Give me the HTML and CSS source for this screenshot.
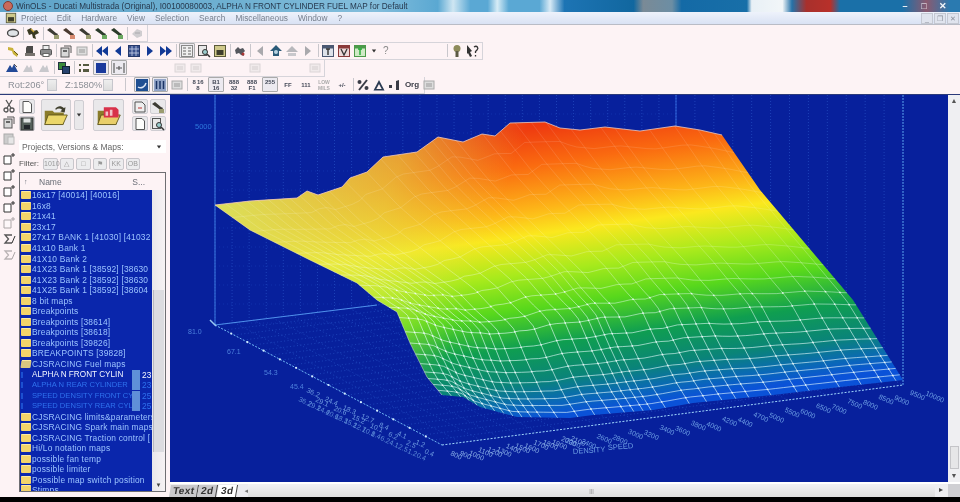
FILE: index.html
```html
<!DOCTYPE html>
<html lang="en">
<head>
<meta charset="utf-8">
<title>WinOLS</title>
<link rel="stylesheet" href="styles.css">
</head>
<body>
<svg class="sprite" aria-hidden="true">
  <symbol id="i-oval" viewBox="0 0 14 14"><ellipse cx="7" cy="7" rx="5.5" ry="3.5" fill="#dfe3e6" stroke="#444" stroke-width="1.3"/></symbol>
  <symbol id="i-sat" viewBox="0 0 14 14"><path d="M1 4l4-2 2 3 4-1 2 3-4 2 1 4-3-1-1-4-3 1z" fill="#3a3a22"/><path d="M5 3l3 3" stroke="#c9a63a" stroke-width="1.4"/></symbol>
  <symbol id="i-wr" viewBox="0 0 14 14"><path d="M1 4l3-2 6 5 2 1-1 2-3-1z" fill="#3c3c34"/><rect x="8" y="9" width="5" height="4" fill="#9a9c70"/></symbol>
  <symbol id="i-wr2" viewBox="0 0 14 14"><path d="M1 4l3-2 6 5 2 1-1 2-3-1z" fill="#4a3a30"/><rect x="8" y="9" width="5" height="4" fill="#d88a70"/></symbol>
  <symbol id="i-wr3" viewBox="0 0 14 14"><path d="M1 4l3-2 6 5 2 1-1 2-3-1z" fill="#2c3c2c"/><rect x="8" y="9" width="5" height="4" fill="#6aa860"/></symbol>
  <symbol id="i-faint" viewBox="0 0 14 14"><path d="M2 8l5-5 5 2v5l-5 2z" fill="#cfcdd0"/><path d="M5 7h5" stroke="#a9a8ac"/></symbol>
  <symbol id="i-key" viewBox="0 0 14 14"><path d="M1 3l5 1 1 3 4 3-1 3-4-3-1-3-4-1z" fill="#c9b23a"/><path d="M7 7l4 4" stroke="#66581a"/></symbol>
  <symbol id="i-doc" viewBox="0 0 14 14"><path d="M4 2h6v10H3V4z" fill="#4b4a48"/><rect x="2" y="9" width="10" height="3" fill="#77736e"/></symbol>
  <symbol id="i-print" viewBox="0 0 14 14"><rect x="4" y="1.5" width="6" height="4" fill="#eee" stroke="#666"/><rect x="1.5" y="5.5" width="11" height="5.5" rx="1" fill="#8a8a8c" stroke="#555"/><rect x="4" y="9.5" width="6" height="3" fill="#fff" stroke="#666"/></symbol>
  <symbol id="i-copy" viewBox="0 0 14 14"><rect x="2" y="4" width="8" height="9" fill="#d8d8d8" stroke="#555"/><path d="M5 2h7v7" fill="none" stroke="#555"/><rect x="4" y="6" width="4" height="2" fill="#666"/></symbol>
  <symbol id="i-dl" viewBox="0 0 14 14"><path d="M7 2L1 7l6 5zM13 2L7 7l6 5z" fill="#123a96"/></symbol>
  <symbol id="i-l" viewBox="0 0 14 14"><path d="M10 2L4 7l6 5z" fill="#123a96"/></symbol>
  <symbol id="i-r" viewBox="0 0 14 14"><path d="M4 2l6 5-6 5z" fill="#123a96"/></symbol>
  <symbol id="i-dr" viewBox="0 0 14 14"><path d="M1 2l6 5-6 5zM7 2l6 5-6 5z" fill="#123a96"/></symbol>
  <symbol id="i-grid" viewBox="0 0 14 14"><rect x="1.5" y="1.5" width="11" height="11" fill="#38508c" stroke="#24386a"/><path d="M5 2v10M9 2v10M2 5h10M2 9h10" stroke="#c9d2ea" stroke-width=".8"/></symbol>
  <symbol id="i-table" viewBox="0 0 14 14"><rect x="1.5" y="1.5" width="11" height="11" fill="#eee" stroke="#888"/><path d="M3 4h3M8 4h3M3 7h3M8 7h3M3 10h3M8 10h3" stroke="#666"/></symbol>
  <symbol id="i-find" viewBox="0 0 14 14"><rect x="1.5" y="1.5" width="8" height="10" fill="#e8e8e8" stroke="#555"/><circle cx="8" cy="8" r="2.5" fill="#9cc" stroke="#333"/><path d="M10 10l3 3" stroke="#333" stroke-width="1.5"/></symbol>
  <symbol id="i-yel" viewBox="0 0 14 14"><rect x="1.5" y="1.5" width="11" height="11" fill="#cfc98a" stroke="#5a5a3a"/><rect x="3.5" y="6" width="7" height="5" fill="#3e3e2c"/></symbol>
  <symbol id="i-dots" viewBox="0 0 14 14"><path d="M2 6l3-3 2 2 3-1 2 3-2 2 1 3-3-1-2-2-3 1z" fill="#55585e"/><circle cx="10" cy="10" r="1.5" fill="#a33"/></symbol>
  <symbol id="i-gl" viewBox="0 0 14 14"><path d="M10 2L4 7l6 5z" fill="#a9a9ad"/></symbol>
  <symbol id="i-gr" viewBox="0 0 14 14"><path d="M4 2l6 5-6 5z" fill="#a9a9ad"/></symbol>
  <symbol id="i-up" viewBox="0 0 14 14"><path d="M7 1L1 7h3v5h6V7h3z" fill="#2a5a78"/><circle cx="7" cy="8" r="2" fill="#b6d2e2"/></symbol>
  <symbol id="i-home" viewBox="0 0 14 14"><path d="M7 2L1 8h12z" fill="#b8b8bc"/><rect x="3" y="9" width="8" height="3" fill="#c8c8cc"/></symbol>
  <symbol id="i-tb" viewBox="0 0 14 14"><rect x="1.5" y="1.5" width="11" height="11" fill="#dde2ea" stroke="#4a5872"/><rect x="2" y="2" width="10" height="2.5" fill="#4a5872"/><path d="M7 5v6M5 5h4" stroke="#333" stroke-width="1.4"/></symbol>
  <symbol id="i-tr" viewBox="0 0 14 14"><rect x="1.5" y="1.5" width="11" height="11" fill="#ecd8d8" stroke="#8a3a3a"/><rect x="2" y="2" width="10" height="2.5" fill="#8a3a3a"/><path d="M4 5l3 6 3-6" stroke="#333" fill="none" stroke-width="1.3"/></symbol>
  <symbol id="i-tg" viewBox="0 0 14 14"><rect x="1.5" y="1.5" width="11" height="11" fill="#cfeac6" stroke="#4c9a4a"/><rect x="2" y="2" width="10" height="2.5" fill="#4c9a4a"/><path d="M7 5v6M5 5h4" stroke="#2a3" stroke-width="1.4"/></symbol>
  <symbol id="i-caret" viewBox="0 0 14 14"><path d="M4 5h6L7 9z" fill="#333"/></symbol>
  <symbol id="i-bulb" viewBox="0 0 14 14"><circle cx="7" cy="4.500" r="3.500" fill="#8d8a5a"/><rect x="5.500" y="7" width="3" height="6" fill="#5c5a44"/></symbol>
  <symbol id="i-help" viewBox="0 0 14 14"><path d="M1 1l5 6-2 1 2 4-2 1-2-4-1 1z" fill="#333"/><path d="M8 3c3-2 5 1 3 3l-1.500 1.500V9M9.500 11v1.500" fill="none" stroke="#333" stroke-width="1.300"/></symbol>
  <symbol id="i-mnt" viewBox="0 0 14 14"><path d="M1 11l4-7 2 3 2-4 4 8z" fill="#234a98"/><path d="M9 3l3 3" stroke="#555"/></symbol>
  <symbol id="i-mntg" viewBox="0 0 14 14"><path d="M2 11l4-7 2 3 2-3 2 7z" fill="#c8c8cc"/></symbol>
  <symbol id="i-chip" viewBox="0 0 14 14"><rect x="1.500" y="1.500" width="7" height="7" fill="#3a8a3a" stroke="#234"/><rect x="5.500" y="5.500" width="7" height="7" fill="#26426e" stroke="#123"/></symbol>
  <symbol id="i-bars" viewBox="0 0 14 14"><path d="M2 3h2v2H2zM2 8h2v3H2zM6 3h6v2H6zM6 8h6v3H6z" fill="#555a40"/></symbol>
  <symbol id="i-sq" viewBox="0 0 14 14"><rect x="2" y="2" width="10" height="10" fill="#1b3a9c"/></symbol>
  <symbol id="i-plus" viewBox="0 0 14 14"><path d="M2 2v10M12 2v10M4 7h6M7 5v4" stroke="#555" stroke-width="1.100" fill="none"/></symbol>
  <symbol id="i-rotb" viewBox="0 0 14 14"><rect x="1" y="1" width="12" height="12" fill="#1f4f92"/><path d="M3 9c3 2 7 0 8-4" stroke="#dbe6f5" fill="none" stroke-width="1.500"/></symbol>
  <symbol id="i-cols" viewBox="0 0 14 14"><rect x="1" y="1" width="12" height="12" fill="#93a5c8"/><path d="M3.500 3v8M7 3v8M10.500 3v8" stroke="#1d3466" stroke-width="1.500"/></symbol>
  <symbol id="i-lines" viewBox="0 0 14 14"><rect x="2" y="3" width="10" height="8" fill="#ddd" stroke="#aaa"/><path d="M4 6h6M4 8h6" stroke="#999"/></symbol>
  <symbol id="i-pct" viewBox="0 0 14 14"><path d="M11 2L3 12" stroke="#3a3c46" stroke-width="2"/><circle cx="3.500" cy="4" r="2" fill="#3a3c46"/><circle cx="10.500" cy="10" r="2" fill="#3a3c46"/></symbol>
  <symbol id="i-tri" viewBox="0 0 14 14"><path d="M7 2L1.500 12.500h11zM7 6l2.700 5H4.300z" fill="#2b3b52" fill-rule="evenodd"/></symbol>
  <symbol id="i-one" viewBox="0 0 14 14"><path d="M1 7h3v3H1zM8 3l3-1v10H8z" fill="#3a3c46"/></symbol>
  <symbol id="i-filev" viewBox="0 0 14 14"><path d="M2 2h7l3 3v7H2z" fill="#eee" stroke="#555"/><path d="M5 8h4" stroke="#b33"/></symbol>
  <symbol id="i-star" viewBox="0 0 14 14"><path d="M2 4h7v8H2z" fill="#fff" stroke="#333"/><path d="M11 1v4M9 3h4" stroke="#333"/></symbol>
  <symbol id="i-cut" viewBox="0 0 14 14"><path d="M4 1l5 8M10 1L5 9" stroke="#555" stroke-width="1.300"/><circle cx="4" cy="11" r="2" fill="none" stroke="#555" stroke-width="1.300"/><circle cx="10" cy="11" r="2" fill="none" stroke="#555" stroke-width="1.300"/></symbol>
  <symbol id="i-paste" viewBox="0 0 14 14"><rect x="2" y="3" width="9" height="10" fill="#ccc" stroke="#aaa"/><rect x="6" y="6" width="6" height="7" fill="#e6e6e6" stroke="#bbb"/></symbol>
  <symbol id="i-save" viewBox="0 0 14 14"><rect x="1" y="1" width="12" height="12" fill="#55605a" stroke="#333"/><rect x="3.500" y="1.500" width="7" height="4" fill="#dfe3e2"/><rect x="4" y="8" width="6" height="4" fill="#22262a"/></symbol>
  <symbol id="i-page" viewBox="0 0 14 14"><path d="M3 1.500h6l2.500 2.500v8.500H3z" fill="#fdfdfb" stroke="#555"/></symbol>
  <symbol id="i-sum" viewBox="0 0 14 14"><path d="M10 3H3l3.500 4L3 11h7" fill="none" stroke="#555" stroke-width="1.300"/><path d="M10 11l3-7" stroke="#333"/></symbol>
  <symbol id="i-open" viewBox="0 0 30 26"><path d="M2 8h9l2 2h11v14H2z" fill="#8a7c2a"/><path d="M6 13h22l-5 11H2z" fill="#ebd76a" stroke="#5c5218"/><path d="M14 6c3-4 7-4 10-1l2-1-1 6-5-1 2-2c-2-2-5-2-7 0z" fill="#40402e"/></symbol>
  <symbol id="i-openr" viewBox="0 0 30 26"><path d="M2 8h9l2 2h11v14H2z" fill="#8a7c2a"/><path d="M6 13h22l-5 11H2z" fill="#e8cf6a" stroke="#5c5218"/><path d="M9 4h14l3 3v9H9z" fill="#d8324a"/><path d="M11 9h3v5h-3zM16 7h3v7h-3z" fill="#f2c3c8"/></symbol>
</svg>

<div class="page">
  <header class="titlebar">
    <span class="app-ic"></span>
    <span class="title-text">WinOLS - Ducati Multistrada (Original), I00100080003, ALPHA N FRONT CYLINDER FUEL MAP for Default</span>
    <span class="win-btns"><b>&#8211;</b><b>&#9633;</b><b>&#10005;</b></span>
  </header>

  <nav class="menubar">
    <svg class="menu-ic"><use href="#i-yel"/></svg>
    <span>Project</span><span>Edit</span><span>Hardware</span><span>View</span><span>Selection</span><span>Search</span><span>Miscellaneous</span><span>Window</span><span>?</span>
    <span class="mdi-btns"><i>_</i><i>&#10064;</i><i>&#10005;</i></span>
  </nav>

  <section class="toolbars">
    <div class="tbrow">
      <div class="band band-1">
        <svg class="ic"><use href="#i-oval"/></svg><i class="sep"></i>
        <svg class="ic"><use href="#i-sat"/></svg><i class="sep"></i>
        <svg class="ic"><use href="#i-wr"/></svg><svg class="ic"><use href="#i-wr2"/></svg><svg class="ic"><use href="#i-wr"/></svg><svg class="ic"><use href="#i-wr3"/></svg><svg class="ic"><use href="#i-wr3"/></svg><i class="sep"></i>
        <svg class="ic"><use href="#i-faint"/></svg>
      </div>
    </div>
    <div class="tbrow">
      <div class="band band-2">
        <svg class="ic"><use href="#i-key"/></svg><svg class="ic"><use href="#i-doc"/></svg><svg class="ic"><use href="#i-print"/></svg><i class="sep"></i>
        <svg class="ic"><use href="#i-copy"/></svg><svg class="ic"><use href="#i-lines"/></svg><i class="sep"></i>
        <svg class="ic"><use href="#i-dl"/></svg><svg class="ic"><use href="#i-l"/></svg><svg class="ic"><use href="#i-grid"/></svg><svg class="ic"><use href="#i-r"/></svg><svg class="ic"><use href="#i-dr"/></svg><i class="sep"></i>
        <span class="on"><svg class="ic"><use href="#i-table"/></svg></span><svg class="ic"><use href="#i-find"/></svg><svg class="ic"><use href="#i-yel"/></svg><i class="sep"></i>
        <svg class="ic"><use href="#i-dots"/></svg><i class="sep"></i>
        <svg class="ic"><use href="#i-gl"/></svg><svg class="ic"><use href="#i-up"/></svg><svg class="ic"><use href="#i-home"/></svg><svg class="ic"><use href="#i-gr"/></svg><i class="sep"></i>
        <svg class="ic"><use href="#i-tb"/></svg><svg class="ic"><use href="#i-tr"/></svg><svg class="ic"><use href="#i-tg"/></svg><svg class="ic ic-s"><use href="#i-caret"/></svg><span class="qm">?</span>
        <span class="grow"></span><i class="sep"></i>
        <svg class="ic"><use href="#i-bulb"/></svg><svg class="ic"><use href="#i-help"/></svg>
      </div>
    </div>
    <div class="tbrow">
      <div class="band band-3">
        <svg class="ic"><use href="#i-mnt"/></svg><svg class="ic"><use href="#i-mntg"/></svg><svg class="ic"><use href="#i-mntg"/></svg><i class="sep"></i>
        <svg class="ic"><use href="#i-chip"/></svg><i class="sep"></i>
        <svg class="ic"><use href="#i-bars"/></svg><span class="on"><svg class="ic"><use href="#i-sq"/></svg></span><span class="on"><svg class="ic"><use href="#i-plus"/></svg></span>
        <span class="grow"></span>
        <svg class="ic dim"><use href="#i-lines"/></svg><svg class="ic dim"><use href="#i-lines"/></svg>
        <span class="grow"></span>
        <svg class="ic dim"><use href="#i-lines"/></svg>
        <span class="grow"></span>
        <svg class="ic dim"><use href="#i-lines"/></svg>
      </div>
    </div>
    <div class="tbrow">
      <div class="band band-4">
        <span class="val">Rot:206&#176;</span><span class="spin"></span>
        <span class="val val-z">Z:1580%</span><span class="spin"></span><i class="sep sep-wide"></i>
        <span class="on"><svg class="ic"><use href="#i-rotb"/></svg></span><span class="on"><svg class="ic"><use href="#i-cols"/></svg></span><svg class="ic"><use href="#i-lines"/></svg><i class="sep"></i>
        <span class="mini">8&#8201;16<br>8</span><span class="on mini">B1<br>16</span><span class="mini">888<br>32</span><span class="mini">888<br>F1</span><span class="on mini">255</span><span class="mini">FF</span><span class="mini">111</span><span class="mini low">LOW<br>MILS</span><span class="mini">+/-</span><i class="sep"></i>
        <svg class="ic"><use href="#i-pct"/></svg><svg class="ic"><use href="#i-tri"/></svg><svg class="ic"><use href="#i-one"/></svg><span class="mini org">Org</span><svg class="ic"><use href="#i-lines"/></svg>
      </div>
    </div>
  </section>

  <main class="workspace">
    <aside class="sidebar">
      <div class="edge">
        <svg class="ic"><use href="#i-cut"/></svg><svg class="ic"><use href="#i-copy"/></svg><svg class="ic"><use href="#i-paste"/></svg>
        <span class="edge-gap"></span>
        <svg class="ic"><use href="#i-star"/></svg><svg class="ic"><use href="#i-star"/></svg><svg class="ic"><use href="#i-star"/></svg><svg class="ic"><use href="#i-star"/></svg><svg class="ic dim"><use href="#i-star"/></svg>
        <svg class="ic"><use href="#i-sum"/></svg><svg class="ic dim"><use href="#i-sum"/></svg>
      </div>
      <div class="proj">
        <div class="bigrow">
          <div class="stack"><span class="sbtn"><svg class="ic"><use href="#i-page"/></svg></span><span class="sbtn"><svg class="ic"><use href="#i-save"/></svg></span></div>
          <span class="big"><svg class="ic-big"><use href="#i-open"/></svg></span>
          <span class="drop"><svg class="ic ic-s"><use href="#i-caret"/></svg></span>
          <span class="big big-2"><svg class="ic-big"><use href="#i-openr"/></svg></span>
          <div class="quad"><span class="sbtn"><svg class="ic"><use href="#i-filev"/></svg></span><span class="sbtn"><svg class="ic"><use href="#i-wr"/></svg></span><span class="sbtn"><svg class="ic"><use href="#i-page"/></svg></span><span class="sbtn"><svg class="ic"><use href="#i-find"/></svg></span></div>
        </div>
        <div class="combo"><span>Projects, Versions &amp; Maps:</span><svg class="ic ic-s"><use href="#i-caret"/></svg></div>
        <div class="filter"><span>Filter:</span><b>1010</b><b>&#9651;</b><b>&#9633;</b><b>&#9873;</b><b>KK</b><b>OB</b></div>
        <div class="listbox">
          <div class="listhead"><span class="hd-ic">&#8593;</span><span class="hd-name">Name</span><span class="hd-s">S...</span></div>
          <div class="listbody">
            <ul class="tree" id="tree">
              <li><i class="fd"></i>16x17 [40014] [40016]</li>
              <li><i class="fd"></i>16x8</li>
              <li><i class="fd"></i>21x41</li>
              <li><i class="fd"></i>23x17</li>
              <li><i class="fd"></i>27x17 BANK 1 [41030] [41032</li>
              <li><i class="fd"></i>41x10 Bank 1</li>
              <li><i class="fd"></i>41X10 Bank 2</li>
              <li><i class="fd"></i>41X23 Bank 1 [38592] [38630</li>
              <li><i class="fd"></i>41X23 Bank 2 [38592] [38630</li>
              <li><i class="fd"></i>41X25 Bank 1 [38592] [38604</li>
              <li><i class="fd"></i>8 bit maps</li>
              <li><i class="fd"></i>Breakpoints</li>
              <li><i class="fd"></i>Breakpoints [38614]</li>
              <li><i class="fd"></i>Breakpoints [38618]</li>
              <li><i class="fd"></i>Breakpoints [39826]</li>
              <li><i class="fd"></i>BREAKPOINTS [39828]</li>
              <li><i class="fd fd-open"></i>CJSRACING Fuel maps</li>
              <li class="map cur"><i class="mp"></i><span class="mn">ALPHA N FRONT CYLIN</span><em></em><span>23</span></li>
              <li class="map"><i class="mp"></i><span class="mn">ALPHA N REAR CYLINDER</span><em></em><span>23</span></li>
              <li class="map"><i class="mp"></i><span class="mn">SPEED DENSITY FRONT CY</span><em></em><span>25</span></li>
              <li class="map"><i class="mp"></i><span class="mn">SPEED DENSITY REAR CYL</span><em></em><span>25</span></li>
              <li><i class="fd"></i>CJSRACING limits&amp;parameters</li>
              <li><i class="fd"></i>CJSRACING Spark main maps</li>
              <li><i class="fd"></i>CJSRACING Traction control [</li>
              <li><i class="fd"></i>Hi/Lo notation maps</li>
              <li><i class="fd"></i>possible fan temp</li>
              <li><i class="fd"></i>possible limiter</li>
              <li><i class="fd"></i>Possible map switch position</li>
              <li class="last"><i class="fd"></i>Stimps</li>
            </ul>
            <div class="vscroll small-scroll"><span class="thumb"></span><span class="sc-down">&#9660;</span></div>
          </div>
        </div>
      </div>
    </aside>

    <section class="viewer">
      <div class="viewrow">
        <svg class="plot" id="plot" viewBox="170 95 778 387" preserveAspectRatio="none" role="img" aria-label="3D fuel map">
          <defs>
            <linearGradient id="heat" gradientUnits="userSpaceOnUse" x1="545" y1="125" x2="585" y2="412">
              <stop offset="0" stop-color="#ee3a10"/>
              <stop offset=".13" stop-color="#fa6a10"/>
              <stop offset=".28" stop-color="#fdb418"/>
              <stop offset=".37" stop-color="#fbe81e"/>
              <stop offset=".5" stop-color="#a8ea1c"/>
              <stop offset=".62" stop-color="#58d81c"/>
              <stop offset=".75" stop-color="#0f9e50"/>
              <stop offset=".87" stop-color="#0a8478"/>
              <stop offset=".95" stop-color="#0a68b8"/>
              <stop offset="1" stop-color="#0a52d8"/>
            </linearGradient>
            <linearGradient id="pale" gradientUnits="userSpaceOnUse" x1="215" y1="200" x2="470" y2="290">
              <stop offset="0" stop-color="#d8e860" stop-opacity=".95"/>
              <stop offset=".6" stop-color="#e0ea50" stop-opacity=".55"/>
              <stop offset="1" stop-color="#e0ea50" stop-opacity="0"/>
            </linearGradient>
            <linearGradient id="wire" gradientUnits="userSpaceOnUse" x1="0" y1="130" x2="0" y2="330">
              <stop offset="0" stop-color="#fff" stop-opacity=".14"/>
              <stop offset=".55" stop-color="#fff" stop-opacity=".2"/>
              <stop offset="1" stop-color="#eaffff" stop-opacity=".8"/>
            </linearGradient>
          </defs>
        </svg>
        <div class="vscroll main-scroll"><span class="sc-up">&#9650;</span><span class="grip"></span><span class="sc-down">&#9660;</span></div>
      </div>
      <div class="tabrow">
        <div class="tabs"><span class="tab">Text</span><span class="tab">2d</span><span class="tab tab-on">3d</span><span class="tab-arrow">&#9666;</span></div>
        <div class="hscroll"><span class="hgrip">|||</span></div>
        <span class="corner">&#9656;</span>
      </div>
    </section>
  </main>
  <div class="blackbar"></div>
</div>
<script src="app.js"></script>
</body>
</html>
```
FILE: styles.css
```css
*{box-sizing:border-box}
html,body{margin:0;padding:0;height:100%;background:#000;overflow:hidden}
body{font-family:"Liberation Sans",Arial,sans-serif;color:#555}
.sprite{display:none}
.page{width:960px;height:502px;display:flex;flex-direction:column;background:#fdf3f5;filter:blur(.55px);overflow:hidden}

.titlebar{height:12px;flex:none;display:flex;align-items:center;padding-left:3px;font-size:8.2px;color:#27394e;white-space:nowrap;
 background:linear-gradient(90deg,#5ea3c8 0,#6fb1d2 25%,#84bedc 39%,#5aa8d2 45.600%,#cfe6f2 47.200%,#5aa8d4 49%,#5aa8d4 50.800%,#d6ecf6 51.800%,#5aa8d4 53%,#5aa8d4 56.200%,#d8eaf6 57.300%,#1d74b4 58.800%,#11679f 66%,#7a8a96 67%,#6c8ea4 70%,#146aa6 71%,#186fa8 77.800%,#e8f0f6 78.300%,#f2f6f8 81.500%,#2572a8 82.500%,#a8302c 84%,#b8302a 86.500%,#1a70a8 87.500%,#1a70a8 94%,#8a5a70 96.500%,#2a7ab0 99%)}
.app-ic{width:10px;height:10px;border-radius:50%;background:#c96a5c;border:1px solid #7d3a34;flex:none}
.title-text{margin-left:3px;flex:1}
.win-btns{display:flex;gap:7px;padding-right:11px;color:#f4f8fb;font-size:9px}
.win-btns b{width:12px;text-align:center;line-height:12px}

.menubar{height:13px;flex:none;display:flex;align-items:center;gap:10px;padding-left:5px;font-size:8.300px;color:#77808e;background:linear-gradient(#eef2fb,#d9e2f4);border-bottom:1px solid #b9bcc6;white-space:nowrap}
.menu-ic{width:12px;height:12px;flex:none;margin-right:-6px}
.mdi-btns{margin-left:auto;display:flex;gap:1px;padding-right:1px}
.mdi-btns i{width:12px;height:11px;border:1px solid #c4c8d2;background:#e0e4ee;font-style:normal;font-size:7px;line-height:9px;text-align:center;color:#8a8f9a}

.toolbars{height:70px;flex:none;display:flex;flex-direction:column;border-bottom:1px solid #2b3a7a}
.tbrow{height:17.500px;display:flex;align-items:stretch}
.band{display:flex;align-items:center;height:100%;padding-left:6px;border-bottom:1px solid #d6d4da;border-right:1px solid #d6d4da;gap:2px}
.band-1{width:148px}
.band-2{width:483px;border-top:1px solid #d6d4da;padding-left:7px;padding-right:2px}
.band-3{width:325px;padding-left:5px;padding-right:2px}
.band-4{width:425px;padding-left:8px}
.ic{width:14px;height:14px;flex:none;display:block}
.ic-s{width:10px}
.dim{opacity:.4}
.sep{width:1px;height:13px;background:#c9c7cc;margin:0 .5px;flex:none;display:block}
.sep-wide{margin:0 6px 0 10px}
.on{display:flex;align-items:center;justify-content:center;height:15px;min-width:16px;border:1px solid #aaa;background:#eceaf0;border-radius:1px;flex:none}
.qm{font-size:10px;color:#888;margin-left:2px}
.grow{flex:1}
.val{font-size:9.300px;color:#8b8f96;width:37px;white-space:nowrap;flex:none}
.val-z{margin-left:6px;width:36px}
.spin{width:10px;height:12px;border:1px solid #c6c6cc;background:linear-gradient(#eee,#ddd);flex:none}
.mini{font-size:6px;line-height:6px;font-weight:700;color:#444a58;width:16px;text-align:center;flex:none;white-space:nowrap;min-width:0}
.mini.on{width:16px;flex-direction:column;font-size:6px;display:block;padding-top:1px}
.low{color:#aaa;font-size:5px}
.org{font-size:8px;color:#3a3c46}

.workspace{flex:1;min-height:0;display:flex}
.sidebar{width:170px;flex:none;display:flex;background:#fdf3f5}
.edge{width:18px;flex:none;display:flex;flex-direction:column;align-items:center;padding-top:4px;gap:2px}
.edge-gap{height:3px}
.proj{flex:1;display:flex;flex-direction:column;padding:3px 4px 5px 1px;min-width:0}
.bigrow{display:flex;height:34px;align-items:center}
.stack{display:flex;flex-direction:column;gap:2px;width:17px;margin-right:5px}
.sbtn{display:flex;width:16px;height:15px;align-items:center;justify-content:center;background:#e9e8ea;border:1px solid #cfcdd2;border-radius:2px}
.big{width:31px;height:32px;display:flex;align-items:center;justify-content:center;background:#e9e8ea;border:1px solid #cfcdd2;border-radius:2px}
.big-2{margin-left:9px}
.ic-big{width:26px;height:24px}
.drop{width:10px;height:30px;margin-left:3px;display:flex;align-items:center;justify-content:center;background:#e9e8ea;border:1px solid #cfcdd2;border-radius:2px}
.quad{display:grid;grid-template-columns:16px 16px;gap:2px;margin-left:8px}
.combo{height:13px;margin-top:8px;display:flex;align-items:center;justify-content:space-between;background:#fff;padding:0 2px 0 3px;font-size:8.500px;color:#666;white-space:nowrap}
.filter{height:13px;margin-top:4px;display:flex;align-items:center;gap:2px;font-size:8px;color:#555;white-space:nowrap}
.filter span{margin-right:2px}
.filter b{width:14.500px;height:12px;border:1px solid #c8c6cb;background:#ececee;border-radius:2px;font-size:7px;font-weight:400;text-align:center;line-height:10px;color:#999}
.listbox{flex:1;min-height:0;margin-top:2px;border:1px solid #6e6e72;background:#fdf3f5;display:flex;flex-direction:column}
.listhead{height:17px;flex:none;display:flex;align-items:center;font-size:8.500px;color:#6b6f78;padding:0 4px}
.hd-ic{width:12px;font-size:7px}
.hd-name{flex:1;margin-left:3px}
.hd-s{margin-right:16px}
.listbody{flex:1;min-height:0;display:flex}
.tree{margin:0;padding:0;list-style:none;flex:1;min-width:0;overflow:hidden;background:#0a26ac}
.tree li{height:10.550px;line-height:10px;display:flex;align-items:center;font-size:8.400px;letter-spacing:.2px;color:#9cc4ff;white-space:nowrap;overflow:hidden}
.tree li.last{height:9px;align-items:flex-start}
.fd{width:10px;height:8px;background:#f2d36a;flex:none;margin:0 1px;display:block;border-top:1px solid #fbeaa2;border-radius:1px}
.fd-open{background:#d8c880;transform:skewX(-8deg)}
.tree .map{color:#2f72ee}
.tree .map.cur{color:#f2f6ff}
.mp{width:10px;height:6px;flex:none;margin:0 1px;display:block;background:linear-gradient(90deg,#1c50d0 0 2px,transparent 2px)}
.mn{width:100px;flex:none;font-size:7.600px;letter-spacing:0;overflow:hidden}
.cur .mn{font-size:8.200px}
.tree em{width:8px;height:10px;background:#5f8fd8;flex:none;margin-right:2px}
.vscroll{flex:none;display:flex;flex-direction:column}
.small-scroll{width:13px;background:linear-gradient(90deg,#e8e6ea,#f6f2f4);padding-top:100px;align-items:center;font-size:6px;color:#444}
.thumb{display:block;width:11px;height:162px;background:#dcdce0;border-left:1px solid #b9b9bf}

.viewer{flex:1;min-width:0;display:flex;flex-direction:column}
.viewrow{flex:1;min-height:0;display:flex}
.plot{width:778px;height:387px;flex:none;display:block;background:#07209c}
.main-scroll{width:12px;background:#efeff2;align-items:center;font-size:7px;color:#555;padding-top:2px}
.sc-up{height:10px}
.grip{margin-top:auto;width:9px;height:23px;border:1px solid #c4c4c8;background:#e6e6e8}
.sc-down{height:12px;margin-top:1px;line-height:12px}
.small-scroll .sc-down{margin-top:auto}

.tabrow{height:15px;flex:none;display:flex;align-items:stretch;border-top:2px solid #fff;background:#ececf0}
.tabs{display:flex;align-items:center;width:78px;flex:none;font-size:10px;font-weight:700;color:#333}
.tab{padding:0 3px;height:12px;line-height:11px;background:#c9c9cc;border-right:1px solid #444;transform:skewX(-10deg);letter-spacing:.4px}
.tab-on{background:#fff}
.tab-arrow{margin-left:8px;font-size:7px;color:#777}
.hscroll{flex:1;display:flex;justify-content:center;align-items:center;background:linear-gradient(#f2f2f4,#dededf);font-size:6px;color:#888}
.corner{width:25px;flex:none;font-size:8px;line-height:12px;color:#444;padding-left:4px;background:linear-gradient(90deg,#efeff1 13px,#cfcfd3 13px)}
.blackbar{height:5px;flex:none;background:#000}
```
FILE: app.js
```js
(function () {
  var NS = 'http://www.w3.org/2000/svg';
  var plot = document.getElementById('plot');

  function el(name, attrs, parent) {
    var n = document.createElementNS(NS, name);
    for (var k in attrs) n.setAttribute(k, attrs[k]);
    (parent || plot).appendChild(n);
    return n;
  }
  function line(a, b, stroke, width, dash, parent) {
    var at = { x1: a[0], y1: a[1], x2: b[0], y2: b[1], stroke: stroke, 'stroke-width': width };
    if (dash) at['stroke-dasharray'] = dash;
    return el('line', at, parent);
  }
  function lerp(a, b, t) { return [a[0] + (b[0] - a[0]) * t, a[1] + (b[1] - a[1]) * t]; }

  var top = [[215,205],[250,201],[297,198],[307,191],[318,195],[342,187],[350,178],[367,172],[383,157],[417,152],[438,137],[463,142],[482,134],[495,136],[510,123],[545,122],[560,128],[580,130],[605,127],[640,131],[675,126],[700,130],[722,135]];
  var bottom = [[442,395],[463,397],[480,407],[517,417],[570,418],[593,415],[653,410],[693,403],[773,395],[840,387],[903,380]];
  var left = [[215,205],[250,230],[310,260],[357,283],[377,300],[397,312],[410,343],[427,377],[442,395]];
  var right = [[722,135],[760,190],[853,300],[903,380]];

  function at(poly, t) {
    var i, len = [0];
    for (i = 1; i < poly.length; i++) {
      len[i] = len[i-1] + Math.hypot(poly[i][0]-poly[i-1][0], poly[i][1]-poly[i-1][1]);
    }
    var d = t * len[len.length-1];
    for (i = 1; i < poly.length; i++) {
      if (d <= len[i]) return lerp(poly[i-1], poly[i], (d-len[i-1])/(len[i]-len[i-1] || 1));
    }
    return poly[poly.length-1];
  }
  /* Coons patch over the four edges of the surface */
  function patch(u, v) {
    var t = at(top, u), b = at(bottom, u), l = at(left, v), r = at(right, v);
    var c00 = top[0], c10 = top[top.length-1], c01 = bottom[0], c11 = bottom[bottom.length-1];
    var out = [];
    for (var i = 0; i < 2; i++) {
      out[i] = (1-v)*t[i] + v*b[i] + (1-u)*l[i] + u*r[i]
        - ((1-u)*(1-v)*c00[i] + u*(1-v)*c10[i] + (1-u)*v*c01[i] + u*v*c11[i]);
    }
    return out;
  }

  /* ---------- walls and floor grid ---------- */
  var bl = [215,325], fl = [442,445], fr = [903,385], br = [676,268];
  var i, p, x;
  var walls = el('g', {});
  for (i = 0; i <= 27; i++) {
    x = 215 + i * (676-215) / 27;
    p = lerp(bl, br, i/27);
    line([x, 95], p, '#2650c4', .7, '1 2', walls);
  }
  for (i = 1; i <= 12; i++) {
    line([215, 95 + i*19], [676, 95 + i*19], '#1a3cb8', .6, '1 3', walls);
  }
  for (i = 0; i <= 12; i++) {
    x = 676 + i * (903-676) / 12;
    p = lerp(br, fr, i/12);
    line([x, 95], p, '#2650c4', .7, '1 2', walls);
  }
  for (i = 0; i <= 24; i++) {
    line(lerp(bl, br, i/24), lerp(fl, fr, i/24), '#2450c4', .7, '1 2.5', walls);
    line(lerp(bl, fl, i/24), lerp(br, fr, i/24), '#2450c4', .7, '1 2.5', walls);
  }
  line([215,95], [215,325], '#3c7ae0', 1, null, walls);
  line([676,95], [676,132], '#2f62d8', 1, null, walls);
  line([903,95], [903,385], '#5fa8ee', .9, '2 1', walls);
  line(bl, [377,305], '#4f90ea', 1, null, walls);
  line(bl, fl, '#6fb4f2', 1, '2 1.5', walls);
  line(fl, fr, '#9fd4fa', 1, '2 1.5', walls);
  line([210,320], [216,326], '#9ac8f2', 1.5, null, walls);

  /* ---------- heat surface ---------- */
  var outline = top.concat(right.slice(1), bottom.slice().reverse().slice(1), left.slice().reverse().slice(1));
  var pts = outline.map(function (q) { return q.join(','); }).join(' ');
  el('polygon', { points: pts, fill: 'url(#heat)' });
  el('polygon', { points: pts, fill: 'url(#pale)' });
  el('polyline', { points: top.join(' '), fill: 'none', stroke: '#e8c8c0', 'stroke-width': 1, opacity: .8 });
  el('polyline', { points: left.join(' '), fill: 'none', stroke: '#e8eecc', 'stroke-width': .8, opacity: .6 });

  /* ---------- wire mesh ---------- */
  var us = [.02,.04,.06,.08,.1,.12,.14,.16,.18,.2,.22,.256,.3,.336,.369,.4,.42,.44,.457,.488,.54,.577,.61,.64,.668,.716,.772,.798,.863,.91,.954,.985];
  var vs = [.07,.15,.23,.31,.39,.47,.54,.6,.66,.71,.76,.8,.84,.875,.905,.93,.955,.98];
  var wire = el('g', { fill: 'none', stroke: 'url(#wire)', 'stroke-width': .75 });
  var dots = el('g', { fill: '#f4ffff' });
  us.forEach(function (u) {
    var d = '';
    for (var s = 0; s <= 30; s++) {
      p = patch(u, s/30);
      d += (s ? 'L' : 'M') + p[0].toFixed(1) + ' ' + p[1].toFixed(1);
    }
    el('path', { d: d }, wire);
  });
  vs.forEach(function (v) {
    var d = '';
    for (var s = 0; s <= 60; s++) {
      p = patch(s/60, v);
      d += (s ? 'L' : 'M') + p[0].toFixed(1) + ' ' + p[1].toFixed(1);
    }
    el('path', { d: d }, wire);
  });
  us.forEach(function (u) {
    vs.forEach(function (v) {
      var q = patch(u, v);
      if (q[1] > 290) el('circle', { cx: q[0].toFixed(1), cy: q[1].toFixed(1), r: .9, opacity: .7 }, dots);
    });
  });

  /* ---------- floor edge dots ---------- */
  for (i = 1; i < 14; i++) {
    p = lerp(bl, fl, i/14);
    el('circle', { cx: p[0], cy: p[1], r: 1.1, fill: '#d4ecff' });
  }

  /* ---------- axis labels ---------- */
  function label(txt, x, y, rot, size, color) {
    var t = el('text', { x: x, y: y, 'font-family': 'Liberation Sans, Arial, sans-serif', 'font-size': size, fill: color });
    if (rot) t.setAttribute('transform', 'rotate(' + rot + ' ' + x + ' ' + y + ')');
    t.textContent = txt;
  }
  var faint = '#4d80dc';
  label('5000', 195, 129, 0, 7.5, '#2f78dc');
  label('81.0', 188, 334, 0, 7, faint);
  label('67.1', 227, 354, 0, 7, faint);
  label('54.3', 264, 375, 0, 7, faint);
  label('45.4', 290, 389, 0, 7, faint);
  var a = [306,392], b = [424,448];
  ['36.2','29.1','24.4','20.6','18.3','15.2','12.7','10.1','8.4','6.2','4.1','2.5','1.2','0.4'].forEach(function (s, n) {
    p = lerp(a, b, n/13);
    label(s, p[0], p[1] + (n % 2 ? 5 : 0), 24, 7, '#6d9ae0');
    label(s, p[0]-8, p[1] + 9, 24, 7, '#5c8ad8');
  });
  var c = [450,458], d = [570,442];
  ['800','900','1000','1100','1200','1300','1400','1500','1600','1700','1800','1900','2000','2100'].forEach(function (s, n) {
    p = lerp(c, d, n/13);
    label(s, p[0], p[1] - 3 + (n % 3), 24, 7, '#86ace6');
  });
  var e = [565,442], f = [925,392];
  ['2200','2400','2600','2800','3000','3200','3400','3600','3800','4000','4200','4400','4700','5000','5500','6000','6500','7000','7500','8000','8500','9000','9500','10000'].forEach(function (s, n) {
    p = lerp(e, f, n/23);
    label(s, p[0], p[1] + (n % 2 ? 3 : 0), 24, 7, '#6d9ee4');
  });
  label('DENSITY', 573, 454, -4, 7.5, '#6d9ee4');
  label('SPEED', 608, 450, -4, 7.5, '#6d9ee4');
})();
```
